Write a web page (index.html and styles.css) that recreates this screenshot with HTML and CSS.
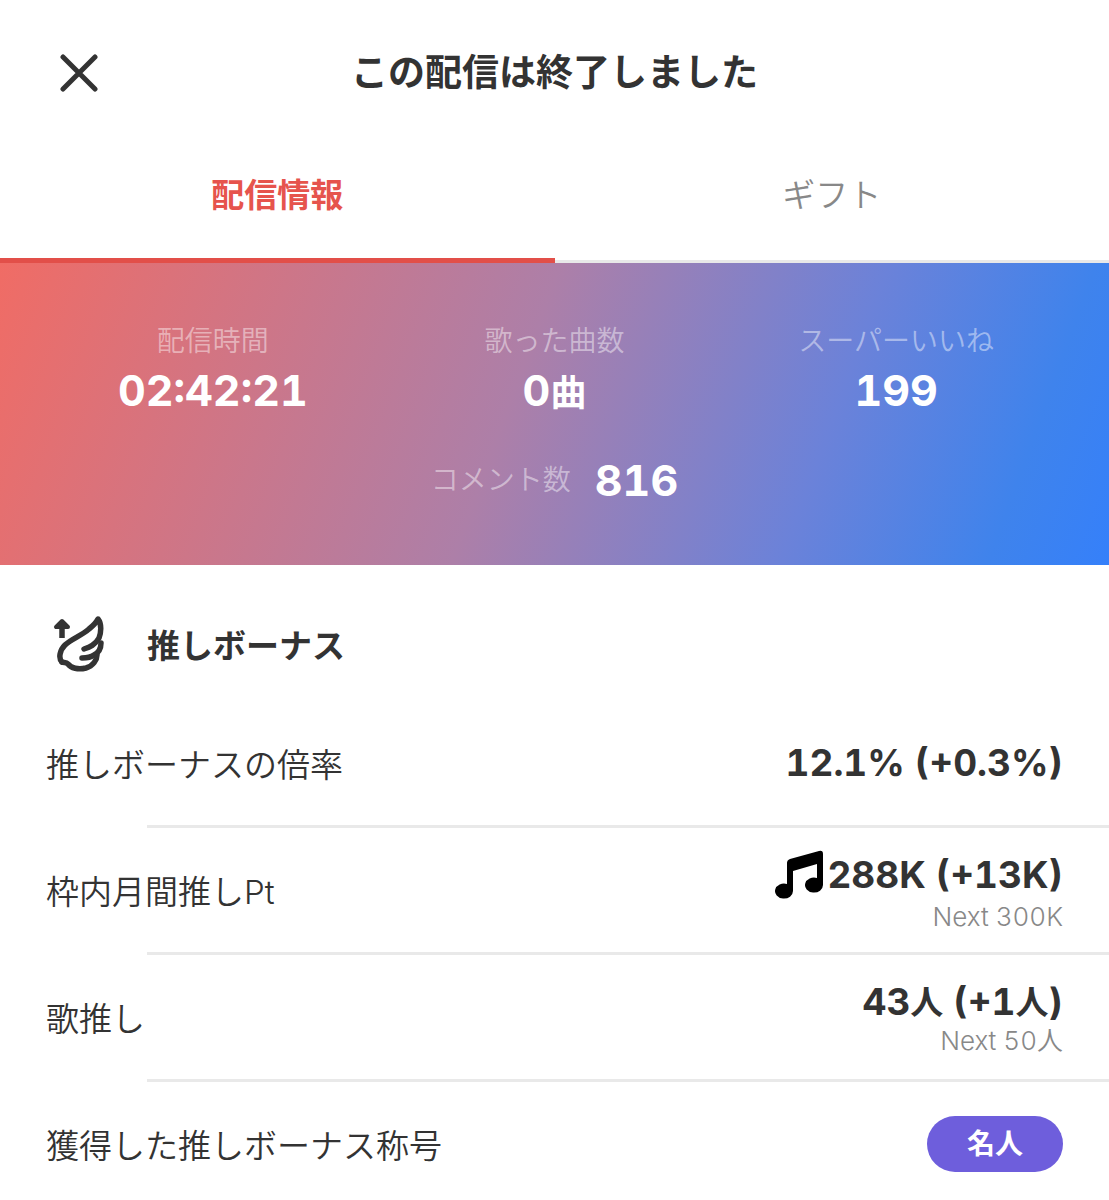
FILE: index.html
```html
<!DOCTYPE html>
<html lang="ja">
<head>
  <meta charset="UTF-8">
  <meta name="viewport" content="width=device-width, initial-scale=1.0">
  <title>この配信は終了しました</title>
  <link rel="stylesheet" href="styles.css">
</head>
<body>
  <header>
    <button class="close" type="button" aria-label="閉じる">
      <svg width="38" height="38" viewBox="0 0 38 38">
        <path d="M3 3L35 35M35 3L3 35" stroke="currentColor" stroke-width="5" stroke-linecap="round"/>
      </svg>
    </button>
    <h1>この配信は終了しました</h1>
  </header>

  <nav class="tabs">
    <button class="tab active" type="button">配信情報</button>
    <button class="tab" type="button">ギフト</button>
  </nav>

  <main>
    <section class="summary">
      <dl class="stats">
        <div class="stat">
          <dt>配信時間</dt>
          <dd>02:42:21</dd>
        </div>
        <div class="stat">
          <dt>歌った曲数</dt>
          <dd>0<span class="unit">曲</span></dd>
        </div>
        <div class="stat">
          <dt>スーパーいいね</dt>
          <dd>199</dd>
        </div>
      </dl>
      <dl class="comments">
        <dt>コメント数</dt>
        <dd>816</dd>
      </dl>
    </section>

    <section class="bonus">
      <h2>
        <svg class="wing" width="54" height="60" viewBox="12 15 54 60" fill="none" stroke="currentColor" stroke-width="5.500" stroke-linecap="round" stroke-linejoin="round">
          <path d="M22 37V24" stroke-linecap="butt"/>
          <path d="M22 20L16 26H28Z" fill="currentColor" stroke-width="4"/>
          <path d="M22 61C18 57 20 49 25 44C31 38 41 35 49 28C54 24 57 20 58 18C62 23 61 32 59 37C55 44 50 46 44 48"/>
          <path d="M61 42C61 48 58 52 54 54C50 57 46 57 42 57"/>
          <path d="M57 54C57 59 53 65 46 67C38 69 31 67 28 63C26 61 24 62 22 61"/>
        </svg>
        推しボーナス
      </h2>

      <ul class="rows">
        <li>
          <div class="row">
            <span>推しボーナスの倍率</span>
            <strong>12.1% (+0.3%)</strong>
          </div>
        </li>
        <li>
          <div class="row">
            <span>枠内月間推しPt</span>
            <div class="value">
              <strong>
                <svg class="note" width="54" height="50" viewBox="12 10 54 50">
                  <path d="M26 23Q26 20 29 19L58 11Q62 10 62 14V45A9 7.500 0 1 1 56 38V24L32 31V51A9 7.500 0 1 1 26 44Z"/>
                </svg>288K (+13K)
              </strong>
              <small>Next 300K</small>
            </div>
          </div>
        </li>
        <li>
          <div class="row">
            <span>歌推し</span>
            <div class="value">
              <strong>43<span class="unit">人</span>&nbsp;(+1<span class="unit">人</span>)</strong>
              <small>Next 50人</small>
            </div>
          </div>
        </li>
        <li>
          <div class="row">
            <span>獲得した推しボーナス称号</span>
            <span class="badge">名人</span>
          </div>
        </li>
      </ul>
    </section>
  </main>
</body>
</html>
```
FILE: styles.css
```css
* {
  box-sizing: border-box;
}

body {
  margin: 0;
  background: #fff;
  color: #333;
  font-family: "Inter", "Noto Sans CJK JP", sans-serif;
  font-variant-numeric: tabular-nums;
  overflow-x: hidden;
}

h1, h2, dl, dd, ul {
  margin: 0;
  padding: 0;
}

button {
  padding: 0;
  border: none;
  background: transparent;
  color: inherit;
  font-family: inherit;
  cursor: pointer;
}

header {
  display: grid;
  grid-template-columns: 62px 1fr 62px;
  align-items: center;
  height: 145px;
  padding: 0 48px;
}

.close {
  display: flex;
  justify-content: center;
}

h1 {
  font-size: 37px;
  line-height: 48px;
  text-align: center;
}

.tabs {
  display: flex;
}

.tab {
  flex: 1;
  height: 118px;
  padding-bottom: 20px;
  border-bottom: 3px solid #e8e8e8;
  color: #888;
  font-size: 33px;
  font-weight: 350;
}

.tab.active {
  padding-bottom: 18px;
  border-bottom: 5px solid #e24f49;
  color: #e6544d;
  font-weight: bold;
}

.summary {
  padding: 58px 42px 56px;
  background: linear-gradient(110deg, #f06c65 0%, #ad7fa8 46%, #6b82d9 73%, #3f83ec 90%, #3580fa 100%);
  color: #fff;
}

.stats {
  display: flex;
}

.stat {
  flex: 1;
  text-align: center;
}

.summary dt {
  color: rgba(255, 255, 255, 0.45);
  font-size: 28px;
  font-weight: 350;
  line-height: 40px;
}

.summary dd {
  font-size: 43px;
  font-weight: bold;
  line-height: 58px;
}

.summary .unit {
  font-size: 36px;
}

.comments {
  display: flex;
  justify-content: center;
  align-items: center;
  gap: 24px;
  margin-top: 29px;
}

h2 {
  display: flex;
  align-items: center;
  gap: 41px;
  padding: 51px 52px 25px;
  font-size: 33px;
  line-height: 60px;
}

.rows {
  list-style: none;
}

/* divider is inset on the left only */
.rows li::after {
  content: "";
  display: block;
  height: 3px;
  margin-left: 147px;
  background: #e9e9e9;
}

.rows li:last-child::after {
  display: none;
}

.row {
  display: flex;
  justify-content: space-between;
  align-items: center;
  height: 124px;
  padding: 0 46px;
  font-size: 33px;
  font-weight: 350;
}

.row strong {
  display: flex;
  align-items: center;
  font-size: 37px;
  font-weight: bold;
  line-height: 44px;
}

.row .unit {
  font-size: 33px;
}

.value {
  display: flex;
  flex-direction: column;
  align-items: flex-end;
  padding-top: 4px;
}

.row small {
  color: #888;
  font-size: 26px;
  font-weight: 350;
  line-height: 34px;
}

.note {
  fill: #000;
}

.badge {
  padding: 0 40px;
  border-radius: 28px;
  background: #6e5edc;
  color: #fff;
  font-size: 28px;
  font-weight: bold;
  line-height: 56px;
}
```
